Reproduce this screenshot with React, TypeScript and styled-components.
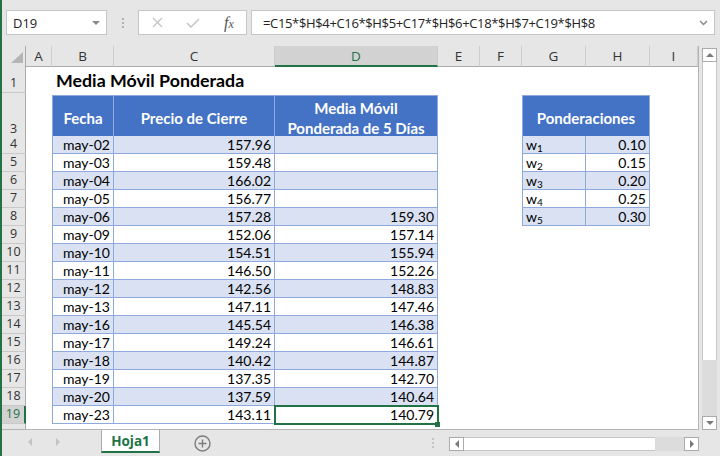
import styled, { createGlobalStyle, css } from "styled-components";

const GlobalStyle = createGlobalStyle`
  html, body {
    margin: 0;
    padding: 0;
    background: #e6e6e6;
  }
  body {
    font-family: "Open Sans", "Noto Sans", sans-serif;
  }
`;

const COLUMNS = "24px 26px 62px 161px 163px 42px 42px 64px 64px 48px";
const LETTERS = ["A", "B", "C", "D", "E", "F", "G", "H", "I"];
const FORMULA = "=C15*$H$4+C16*$H$5+C17*$H$6+C18*$H$7+C19*$H$8";

interface IRow {
  date: string;
  close: string;
  wma: string;
}

const rows: IRow[] = [
  { date: "may-02", close: "157.96", wma: "" },
  { date: "may-03", close: "159.48", wma: "" },
  { date: "may-04", close: "166.02", wma: "" },
  { date: "may-05", close: "156.77", wma: "" },
  { date: "may-06", close: "157.28", wma: "159.30" },
  { date: "may-09", close: "152.06", wma: "157.14" },
  { date: "may-10", close: "154.51", wma: "155.94" },
  { date: "may-11", close: "146.50", wma: "152.26" },
  { date: "may-12", close: "142.56", wma: "148.83" },
  { date: "may-13", close: "147.11", wma: "147.46" },
  { date: "may-16", close: "145.54", wma: "146.38" },
  { date: "may-17", close: "149.24", wma: "146.61" },
  { date: "may-18", close: "140.42", wma: "144.87" },
  { date: "may-19", close: "137.35", wma: "142.70" },
  { date: "may-20", close: "137.59", wma: "140.64" },
  { date: "may-23", close: "143.11", wma: "140.79" },
];

const weights = ["0.10", "0.15", "0.20", "0.25", "0.30"];

type Dir = "up" | "down" | "left" | "right";

function Arrow({ dir, color = "#7a7a7a" }: { dir: Dir; color?: string }) {
  const pts = {
    up: "0,6 4,2 8,6",
    down: "0,2 4,6 8,2",
    left: "6,0 2,4 6,8",
    right: "2,0 6,4 2,8",
  }[dir];
  return (
    <svg width="8" height="8" viewBox="0 0 8 8">
      <polygon points={pts} fill={color} />
    </svg>
  );
}

export default function App() {
  return (
    <>
      <GlobalStyle />
      <Window>
        <FormulaBar>
          <NameBox>
            <span>D19</span>
            <svg width="8" height="4" viewBox="0 0 8 4">
              <polygon points="0,0 8,0 4,4" fill="#8a8a8a" />
            </svg>
          </NameBox>
          <GripSlot>
            <Dots />
          </GripSlot>
          <FxGroup>
            <IconSlot>
              <svg width="11" height="11" viewBox="0 0 11 11">
                <path d="M1 1 L10 10 M10 1 L1 10" stroke="#c4c4c4" strokeWidth="1.3" />
              </svg>
            </IconSlot>
            <IconSlot>
              <svg width="14" height="10" viewBox="0 0 14 10">
                <path d="M1 5 L5 9 L13 1" stroke="#c4c4c4" strokeWidth="1.5" fill="none" />
              </svg>
            </IconSlot>
            <IconSlot>
              <FxText>
                f<small>x</small>
              </FxText>
            </IconSlot>
          </FxGroup>
          <FormulaInput>
            <span>{FORMULA}</span>
            <svg width="9" height="6" viewBox="0 0 9 6">
              <path d="M1 1 L4.5 4.5 L8 1" stroke="#8a8a8a" strokeWidth="1.5" fill="none" />
            </svg>
          </FormulaInput>
        </FormulaBar>

        <Workspace>
          <Sheet>
            <SheetRow $h={19}>
              <Corner>
                <svg width="12" height="11" viewBox="0 0 12 11">
                  <polygon points="12,0 12,11 0,11" fill="#b5b5b5" />
                </svg>
              </Corner>
              {LETTERS.map((l) => (
                <ColHead key={l} $active={l === "D"}>
                  {l}
                </ColHead>
              ))}
            </SheetRow>

            <SheetRow $h={28}>
              <RowHead>1</RowHead>
              <Cell />
              <Title>Media Móvil Ponderada</Title>
              <Cell />
              <Cell />
              <Cell />
              <Cell />
              <Cell />
            </SheetRow>

            <SheetRow $h={2}>
              <RowHead />
            </SheetRow>

            <SheetRow $h={41}>
              <RowHead>3</RowHead>
              <Cell />
              <HeadCell $left>Fecha</HeadCell>
              <HeadCell>Precio de Cierre</HeadCell>
              <HeadCell>
                Media Móvil
                <br />
                Ponderada de 5 Días
              </HeadCell>
              <Cell />
              <Cell />
              <HeadCell $left $span={2}>
                Ponderaciones
              </HeadCell>
              <Cell />
            </SheetRow>

            {rows.map((r, i) => {
              const n = i + 4;
              const tone: Tone = i % 2 === 0 ? "band" : "plain";
              const w = weights[i];
              return (
                <SheetRow key={n} $h={18}>
                  <RowHead $active={n === 19}>{n}</RowHead>
                  <Cell />
                  <Cell $tone={tone} $left $align="right">
                    {r.date}
                  </Cell>
                  <Cell $tone={tone} $align="right">
                    {r.close}
                  </Cell>
                  <Cell $tone={tone} $align="right" $selected={n === 19}>
                    {r.wma}
                  </Cell>
                  <Cell />
                  <Cell />
                  {w ? (
                    <>
                      <Cell $tone={tone} $left>
                        <span>
                          w<Sub>{i + 1}</Sub>
                        </span>
                      </Cell>
                      <Cell $tone={tone} $align="right">
                        {w}
                      </Cell>
                    </>
                  ) : (
                    <>
                      <Cell />
                      <Cell />
                    </>
                  )}
                  <Cell />
                </SheetRow>
              );
            })}

            <FillerRow>
              <RowHead $plain />
            </FillerRow>
          </Sheet>

          <VScroll>
            <ArrowBox>
              <Arrow dir="up" />
            </ArrowBox>
            <VThumb />
            <Track />
            <ArrowBox>
              <Arrow dir="down" />
            </ArrowBox>
          </VScroll>
        </Workspace>

        <TabBar>
          <Nav>
            <NavSlot>
              <Arrow dir="left" color="#c2c2c2" />
            </NavSlot>
            <NavSlot>
              <Arrow dir="right" color="#c2c2c2" />
            </NavSlot>
          </Nav>
          <SheetTab>Hoja1</SheetTab>
          <AddSheet>
            <svg width="17" height="17" viewBox="0 0 17 17">
              <circle cx="8.5" cy="8.5" r="7.5" stroke="#7d7d7d" strokeWidth="1.4" fill="none" />
              <path d="M8.5 4.5 V12.5 M4.5 8.5 H12.5" stroke="#7d7d7d" strokeWidth="1.4" />
            </svg>
          </AddSheet>
          <Spacer />
          <TabGrip>
            <Dots $light />
          </TabGrip>
          <HScroll>
            <ArrowBox>
              <Arrow dir="left" />
            </ArrowBox>
            <HThumb />
            <Track />
            <ArrowBox>
              <Arrow dir="right" />
            </ArrowBox>
          </HScroll>
        </TabBar>
      </Window>
    </>
  );
}

type Tone = "band" | "plain";

const Window = styled.div`
  width: 720px;
  height: 456px;
  box-sizing: border-box;
  border-left: 2px solid #217346;
  background: #e6e6e6;
  display: flex;
  flex-direction: column;
  overflow: hidden;
`;

const FormulaBar = styled.div`
  height: 46px;
  flex: none;
  box-sizing: border-box;
  padding: 10px 0 0 4px;
  display: flex;
  align-items: flex-start;
`;

const Field = styled.div`
  height: 25px;
  box-sizing: border-box;
  background: #fff;
  border: 1px solid #c6c6c6;
  display: flex;
  align-items: center;
`;

const NameBox = styled(Field)`
  width: 101px;
  padding: 0 6px 0 6px;
  justify-content: space-between;
  font-size: 13px;
  color: #222;
`;

const GripSlot = styled.div`
  width: 31px;
  height: 25px;
  display: flex;
  align-items: center;
  justify-content: center;
`;

const Dots = styled.div<{ $light?: boolean }>`
  width: 2px;
  height: 2px;
  margin-top: -8px;
  background: ${(p) => (p.$light ? "#c4c4c4" : "#b0b0b0")};
  box-shadow: 0 4px ${(p) => (p.$light ? "#c4c4c4" : "#b0b0b0")},
    0 8px ${(p) => (p.$light ? "#c4c4c4" : "#b0b0b0")};
`;

const FxGroup = styled(Field)`
  width: 109px;
  display: grid;
  grid-template-columns: repeat(3, 36px);
`;

const IconSlot = styled.div`
  display: flex;
  align-items: center;
  justify-content: center;
  height: 100%;
`;

const FxText = styled.span`
  font-family: "Liberation Serif", serif;
  font-style: italic;
  font-size: 16px;
  color: #555;
  small {
    font-size: 12px;
  }
`;

const FormulaInput = styled(Field)`
  width: 464px;
  margin-left: 4px;
  padding: 0 6px 0 11px;
  justify-content: space-between;
  font-size: 13px;
  letter-spacing: -0.35px;
  color: #222;
`;

const Workspace = styled.div`
  height: 384px;
  flex: none;
  display: flex;
`;

const Sheet = styled.div`
  width: 697px;
  box-sizing: border-box;
  background: #fff;
  border-right: 1px solid #b4b4b4;
  border-bottom: 1px solid #b4b4b4;
  display: flex;
  flex-direction: column;
`;

const SheetRow = styled.div<{ $h: number }>`
  height: ${(p) => p.$h}px;
  flex: none;
  display: grid;
  grid-template-columns: ${COLUMNS};
`;

const FillerRow = styled.div`
  flex: 1;
  display: grid;
  grid-template-columns: ${COLUMNS};
`;

const Corner = styled.div`
  background: #e6e6e6;
  border-right: 1px solid #ababab;
  border-bottom: 1px solid #ababab;
  box-sizing: border-box;
  display: flex;
  align-items: flex-end;
  justify-content: flex-end;
  padding: 0 2px 3px 0;
`;

const ColHead = styled.div<{ $active?: boolean }>`
  box-sizing: border-box;
  background: ${(p) => (p.$active ? "#d2d2d2" : "#e6e6e6")};
  border-right: 1px solid #cdcdcd;
  border-bottom: 1px solid #ababab;
  display: flex;
  align-items: center;
  justify-content: center;
  font-size: 13.5px;
  color: ${(p) => (p.$active ? "#217346" : "#333")};
  ${(p) =>
    p.$active &&
    css`
      border-bottom: 2px solid #217346;
      padding-top: 1px;
    `}
`;

const RowHead = styled.div<{ $active?: boolean; $plain?: boolean }>`
  box-sizing: border-box;
  overflow: hidden;
  background: ${(p) => (p.$active ? "#d2d2d2" : "#e6e6e6")};
  border-right: ${(p) => (p.$active ? "2px solid #217346" : "1px solid #ababab")};
  border-bottom: ${(p) => (p.$plain ? "none" : "1px solid #c9c9c9")};
  display: flex;
  align-items: flex-end;
  justify-content: center;
  font-size: 12.5px;
  line-height: 14px;
  padding-bottom: 2px;
  color: ${(p) => (p.$active ? "#217346" : "#333")};
`;

const Cell = styled.div<{
  $tone?: Tone;
  $left?: boolean;
  $align?: "left" | "right";
  $selected?: boolean;
}>`
  position: relative;
  box-sizing: border-box;
  min-width: 0;
  padding: 0 3px;
  display: flex;
  align-items: flex-end;
  justify-content: ${(p) => (p.$align === "right" ? "flex-end" : "flex-start")};
  font-family: Lato, "Liberation Sans", sans-serif;
  font-size: 14px;
  line-height: 17px;
  color: #000;
  white-space: nowrap;
  ${(p) =>
    p.$tone &&
    css`
      background: ${p.$tone === "band" ? "#d9e1f2" : "#fff"};
      border-right: 1px solid #8ea9db;
      border-bottom: 1px solid #8ea9db;
    `}
  ${(p) =>
    p.$left &&
    css`
      border-left: 1px solid #8ea9db;
    `}
  ${(p) =>
    p.$selected &&
    css`
      &::after {
        content: "";
        position: absolute;
        left: -1px;
        top: -1px;
        right: -2px;
        bottom: -2px;
        border: 2px solid #217346;
      }
      &::before {
        content: "";
        position: absolute;
        right: -3px;
        bottom: -4px;
        width: 5px;
        height: 5px;
        background: #217346;
        z-index: 1;
      }
    `}
`;

const Sub = styled.sub`
  font-size: 10px;
  line-height: 0;
  position: relative;
  top: 2px;
  vertical-align: baseline;
`;

const Title = styled.div`
  grid-column: span 3;
  padding: 0 0 3px 4px;
  display: flex;
  align-items: flex-end;
  font-family: Lato, "Liberation Sans", sans-serif;
  font-weight: 700;
  font-size: 17.8px;
  line-height: 20px;
  color: #000;
`;

const HeadCell = styled.div<{ $left?: boolean; $span?: number }>`
  box-sizing: border-box;
  background: #4472c4;
  border-top: 1px solid #8ea9db;
  border-right: 1px solid #8ea9db;
  border-bottom: 1px solid #8ea9db;
  ${(p) => p.$left && css`border-left: 1px solid #8ea9db;`}
  ${(p) => p.$span && css`grid-column: span ${p.$span};`}
  display: flex;
  align-items: center;
  justify-content: center;
  text-align: center;
  padding-top: 2px;
  font-family: Lato, "Liberation Sans", sans-serif;
  font-weight: 700;
  font-size: 15px;
  line-height: 20px;
  color: #fff;
  white-space: nowrap;
`;

const VScroll = styled.div`
  flex: 1;
  box-sizing: border-box;
  padding: 2px 3px 0 3px;
  display: flex;
  flex-direction: column;
`;

const ArrowBox = styled.div`
  width: 15px;
  height: 14px;
  flex: none;
  box-sizing: border-box;
  background: #fff;
  border: 1px solid #ababab;
  display: flex;
  align-items: center;
  justify-content: center;
`;

const VThumb = styled.div`
  height: 298px;
  flex: none;
  box-sizing: border-box;
  background: #fff;
  border-left: 1px solid #c6c6c6;
  border-right: 1px solid #c6c6c6;
`;

const Track = styled.div`
  flex: 1;
  background: #dcdcdc;
`;

const TabBar = styled.div`
  height: 26px;
  flex: none;
  display: flex;
  align-items: flex-start;
`;

const Nav = styled.div`
  width: 99px;
  height: 24px;
  box-sizing: border-box;
  padding-left: 14px;
  display: flex;
  align-items: center;
`;

const NavSlot = styled.div`
  width: 28px;
  display: flex;
  justify-content: center;
`;

const SheetTab = styled.div`
  width: 59px;
  height: 23px;
  box-sizing: border-box;
  background: #fff;
  border-left: 1px solid #ababab;
  border-right: 1px solid #ababab;
  border-bottom: 2px solid #217346;
  display: flex;
  align-items: center;
  justify-content: center;
  font-family: "Open Sans", sans-serif;
  font-weight: 700;
  font-size: 13.5px;
  color: #217346;
`;

const AddSheet = styled.div`
  width: 28px;
  height: 26px;
  margin-left: 28px;
  display: flex;
  align-items: center;
  justify-content: center;
`;

const Spacer = styled.div`
  flex: 1;
`;

const TabGrip = styled.div`
  width: 10px;
  height: 26px;
  margin-right: 11px;
  display: flex;
  align-items: center;
  justify-content: center;
`;

const HScroll = styled.div`
  width: 250px;
  height: 14px;
  margin: 7px 21px 0 0;
  display: flex;
`;

const HThumb = styled.div`
  width: 191px;
  box-sizing: border-box;
  background: #fff;
  border-top: 1px solid #c6c6c6;
  border-bottom: 1px solid #c6c6c6;
`;
